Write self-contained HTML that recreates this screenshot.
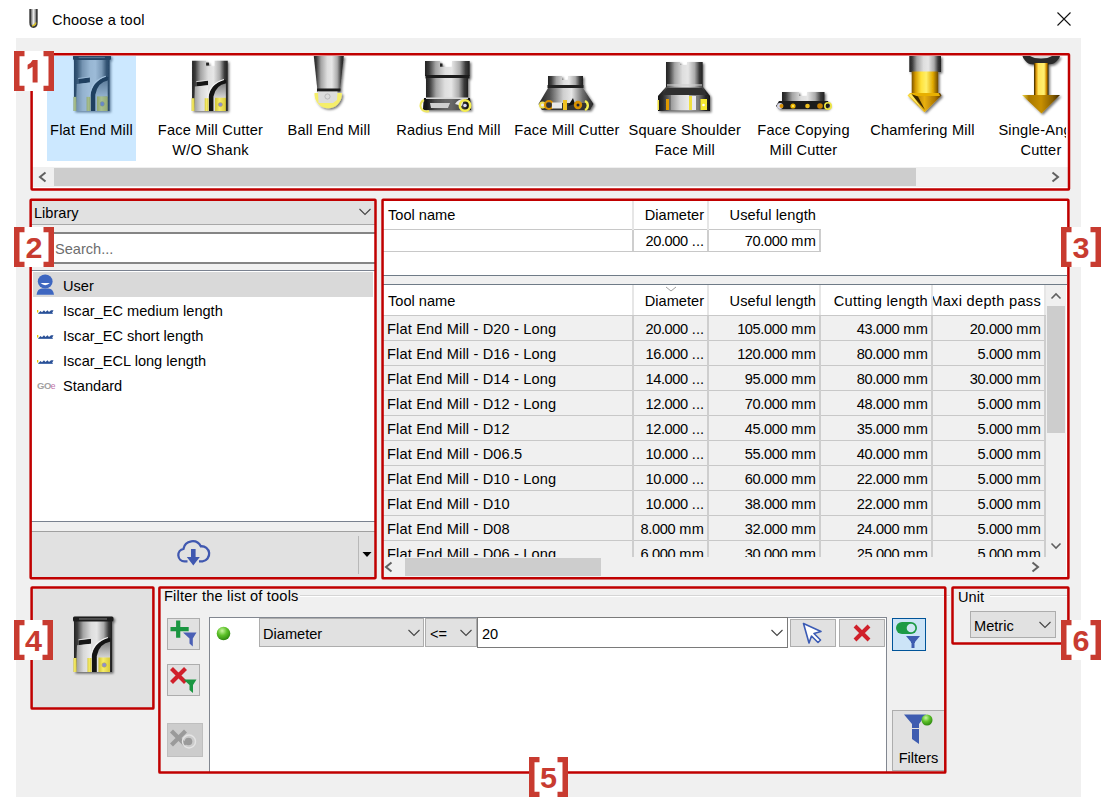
<!DOCTYPE html>
<html><head><meta charset="utf-8"><title>Choose a tool</title>
<style>
html,body{margin:0;padding:0;background:#fff;width:1114px;height:809px;overflow:hidden;position:relative}
.a{position:absolute}
.t{position:absolute;font-family:"Liberation Sans",sans-serif;font-size:14.6px;line-height:20px;white-space:nowrap;color:#000}
</style></head><body>
<svg class="a" style="left:26px;top:6px" width="16" height="24" viewBox="26 6 16 24">
<defs><linearGradient id="tg" x1="0" x2="1"><stop offset="0" stop-color="#555"/><stop offset=".5" stop-color="#e8e8e8"/><stop offset="1" stop-color="#666"/></linearGradient></defs>
<path d="M30.2 9 V22.5 Q30.2 27 33.5 27 Q36.8 27 36.8 22.5 V9" fill="url(#tg)" stroke="#3a3a3a" stroke-width="1.8"/>
<path d="M32 25.8 Q34.8 26 36 22.5" stroke="#d8c020" stroke-width="1.3" fill="none"/>
</svg>
<div class="t" style="left:52px;top:10.0px;font-size:14.6px;color:#000;font-weight:normal;letter-spacing:0.2px">Choose a tool</div>
<svg class="a" style="left:1056px;top:11px" width="16" height="16" viewBox="0 0 16 16"><path d="M1.5 1.5 L14.5 14.5 M14.5 1.5 L1.5 14.5" stroke="#111" stroke-width="1.1"/></svg>
<div class="a" style="left:16px;top:38px;width:1065px;height:759px;background:#f0f0f0"></div>
<div class="a" style="left:31px;top:53px;width:1037px;height:136px;background:#fff;border-top:1px solid #828790"></div>
<div class="a" style="left:47px;top:56px;width:89px;height:105px;background:#cce8ff"></div>
<div class="a" style="left:32px;top:167px;width:1036px;height:20px;background:#f0f0f0"></div>
<div class="a" style="left:54px;top:168px;width:862px;height:18px;background:#cdcdcd"></div>
<svg class="a" style="left:36px;top:170px" width="14" height="14" viewBox="0 0 14 14"><path d="M9.5 2.5 L4 7 L9.5 11.5" fill="none" stroke="#606060" stroke-width="2"/></svg>
<svg class="a" style="left:1048px;top:170px" width="14" height="14" viewBox="0 0 14 14"><path d="M4.5 2.5 L10 7 L4.5 11.5" fill="none" stroke="#606060" stroke-width="2"/></svg>
<div class="a" style="left:31px;top:56px;width:1035px;height:110px;overflow:hidden">
<div class="t" style="left:-89.5px;width:300px;text-align:center;top:64px;letter-spacing:0.2px">Flat End Mill</div>
<div class="t" style="left:29.5px;width:300px;text-align:center;top:64px;letter-spacing:0.2px">Face Mill Cutter</div>
<div class="t" style="left:29.5px;width:300px;text-align:center;top:84px;letter-spacing:0.2px">W/O Shank</div>
<div class="t" style="left:148px;width:300px;text-align:center;top:64px;letter-spacing:0.2px">Ball End Mill</div>
<div class="t" style="left:267.4px;width:300px;text-align:center;top:64px;letter-spacing:0.2px">Radius End Mill</div>
<div class="t" style="left:386px;width:300px;text-align:center;top:64px;letter-spacing:0.2px">Face Mill Cutter</div>
<div class="t" style="left:503.79999999999995px;width:300px;text-align:center;top:64px;letter-spacing:0.2px">Square Shoulder</div>
<div class="t" style="left:503.79999999999995px;width:300px;text-align:center;top:84px;letter-spacing:0.2px">Face Mill</div>
<div class="t" style="left:622.5px;width:300px;text-align:center;top:64px;letter-spacing:0.2px">Face Copying</div>
<div class="t" style="left:622.5px;width:300px;text-align:center;top:84px;letter-spacing:0.2px">Mill Cutter</div>
<div class="t" style="left:741.4px;width:300px;text-align:center;top:64px;letter-spacing:0.2px">Chamfering Mill</div>
<div class="t" style="left:860px;width:300px;text-align:center;top:64px;letter-spacing:0.2px">Single-Angle</div>
<div class="t" style="left:860px;width:300px;text-align:center;top:84px;letter-spacing:0.2px">Cutter</div>
<svg width="0" height="0" style="position:absolute"><defs>
<linearGradient id="metal" x1="0" x2="1"><stop offset="0" stop-color="#222"/><stop offset=".09" stop-color="#3c3c3c"/><stop offset=".24" stop-color="#a4a4a4"/><stop offset=".45" stop-color="#dedede"/><stop offset=".6" stop-color="#e6e6e6"/><stop offset=".78" stop-color="#ababab"/><stop offset=".91" stop-color="#3a3a3a"/><stop offset="1" stop-color="#202020"/></linearGradient>
<filter id="blue" color-interpolation-filters="sRGB"><feColorMatrix type="matrix" values="0.6 0 0 0 0.072  0 0.59 0 0 0.2  0 0 0.57 0 0.33  0 0 0 1 0"/></filter>
<linearGradient id="metal2" x1="0" x2="1"><stop offset="0" stop-color="#202020"/><stop offset=".2" stop-color="#505050"/><stop offset=".45" stop-color="#cfcfcf"/><stop offset=".6" stop-color="#e6e6e6"/><stop offset=".8" stop-color="#707070"/><stop offset="1" stop-color="#222"/></linearGradient>
<linearGradient id="face" x1="0" x2="1"><stop offset="0" stop-color="#9a9a9a"/><stop offset=".5" stop-color="#d8d8d8"/><stop offset="1" stop-color="#ececec"/></linearGradient>
<linearGradient id="facev" x1="0" y1="0" x2="0" y2="1"><stop offset="0" stop-color="#7a7a7a"/><stop offset="1" stop-color="#d8d8d8"/></linearGradient>
<linearGradient id="gold" x1="0" x2="1"><stop offset="0" stop-color="#7a5200"/><stop offset=".14" stop-color="#d49a00"/><stop offset=".35" stop-color="#ffe23a"/><stop offset=".55" stop-color="#fff06a"/><stop offset=".8" stop-color="#e2aa00"/><stop offset="1" stop-color="#6a4600"/></linearGradient>
<linearGradient id="goldc" x1="0" x2="1"><stop offset="0" stop-color="#ffe040"/><stop offset=".3" stop-color="#c08a00"/><stop offset=".5" stop-color="#e8b010"/><stop offset=".8" stop-color="#b07800"/><stop offset="1" stop-color="#5a3a00"/></linearGradient>
<linearGradient id="ins" x1="0" x2="1"><stop offset="0" stop-color="#cfc230"/><stop offset=".4" stop-color="#f6ec6a"/><stop offset="1" stop-color="#d8ca38"/></linearGradient>
<linearGradient id="goldl" x1="0" x2="1"><stop offset="0" stop-color="#2a2000"/><stop offset=".14" stop-color="#d89000"/><stop offset=".3" stop-color="#ffe45a"/><stop offset=".7" stop-color="#fff070"/><stop offset=".86" stop-color="#d08a00"/><stop offset="1" stop-color="#2a2000"/></linearGradient>
<linearGradient id="goldd" x1="0" x2="1"><stop offset="0" stop-color="#f0d848"/><stop offset=".18" stop-color="#a87800"/><stop offset=".5" stop-color="#c89000"/><stop offset=".8" stop-color="#8a6000"/><stop offset="1" stop-color="#3a2600"/></linearGradient>
<filter id="sh" x="-20%" y="-20%" width="150%" height="150%"><feDropShadow dx="1.5" dy="1.5" stdDeviation="1.1" flood-color="#000" flood-opacity=".55"/></filter>
</defs></svg>
<svg class="a" style="left:37px;top:0px;" width="50" height="60" viewBox="68 56 50 60"><g filter="url(#blue)"><g transform="translate(73 55) scale(0.9383 1.0090) translate(-8 -6.5)"><g filter="url(#sh)"><rect x="9" y="9" width="38" height="53" fill="url(#metal)"/><rect x="8" y="6.5" width="40.5" height="5" rx="1.5" fill="#1c1c1c"/><rect x="14" y="8.3" width="28" height="1.3" fill="#666"/></g><path d="M14 30.3 L26 28.6 L26 33.8 L14 35.2 Z" fill="#161616"/><path d="M12 35.2 L26 33.8 L26 62 L11 62 Z" fill="url(#face)"/><path d="M31.8 46 Q33 34 45 31 L45 48 L31.8 48 Z" fill="url(#facev)"/><path d="M26.8 62 V46 Q28.3 33 43.5 27.5 L45.5 28.5 V31.5 Q34 33.5 31.8 46 V62 Z" fill="#141414"/><path d="M26 62 V46 Q27.5 32 43 27.5" fill="none" stroke="#f4f4f4" stroke-width="1.1"/><path d="M13.5 29.8 L26 28.3" fill="none" stroke="#e8e8e8" stroke-width="0.9"/><rect x="8.5" y="48" width="3" height="14" fill="url(#ins)"/><rect x="22.5" y="48" width="4" height="14" fill="url(#ins)"/><rect x="33.5" y="47.5" width="11.5" height="14.5" fill="url(#ins)"/><circle cx="39.2" cy="55" r="2.3" fill="#8d8fd0" stroke="#c0b030" stroke-width=".5"/></g></g></svg>
<svg class="a" style="left:155px;top:0px;" width="50" height="60" viewBox="186 56 50 60"><g transform="translate(191.6 60.8) scale(0.9385 0.9127) translate(-8.5 -7)"><g filter="url(#sh)"><path d="M9 7 H24 V13 H33 V7 H47 V62 H9 Z" fill="url(#metal)"/><rect x="24" y="9" width="3" height="3" fill="#222"/></g><path d="M14 30.3 L26 28.6 L26 33.8 L14 35.2 Z" fill="#161616"/><path d="M12 35.2 L26 33.8 L26 62 L11 62 Z" fill="url(#face)"/><path d="M31.8 46 Q33 34 45 31 L45 48 L31.8 48 Z" fill="url(#facev)"/><path d="M26.8 62 V46 Q28.3 33 43.5 27.5 L45.5 28.5 V31.5 Q34 33.5 31.8 46 V62 Z" fill="#141414"/><path d="M26 62 V46 Q27.5 32 43 27.5" fill="none" stroke="#f4f4f4" stroke-width="1.1"/><path d="M13.5 29.8 L26 28.3" fill="none" stroke="#e8e8e8" stroke-width="0.9"/><rect x="8.5" y="48" width="3" height="14" fill="url(#ins)"/><rect x="22.5" y="48" width="4" height="14" fill="url(#ins)"/><rect x="33.5" y="47.5" width="11.5" height="14.5" fill="url(#ins)"/><circle cx="39.2" cy="55" r="2.3" fill="#8d8fd0" stroke="#c0b030" stroke-width=".5"/></g></svg>
<svg class="a" style="left:274px;top:0px;" width="48" height="62" viewBox="305 56 48 62"><g filter="url(#sh)"><path d="M313.8 56 H343.8 L340 91 H317.5 Z" fill="url(#metal)"/><rect x="317" y="88.5" width="23.5" height="3" fill="#1a1a1a"/><path d="M314.5 95 A13.7 14.5 0 0 0 341.8 95 L341.8 93 H314.5 Z" fill="#f5ee6a"/></g><path d="M318 91.5 H337.5 L337 100 L333 103 H318.5 Z" fill="#dcdcdc"/><circle cx="327.5" cy="96.5" r="2.6" fill="none" stroke="#b0b0b0" stroke-width=".8"/></svg>
<svg class="a" style="left:387px;top:0px;" width="60" height="62" viewBox="418 56 60 62"><g filter="url(#sh)"><path d="M425 61 H440 V67 H452 V61 H469.7 V76 H425 Z" fill="url(#metal)"/><rect x="440" y="63.5" width="2.5" height="3" fill="#222"/><rect x="425.5" y="75" width="44" height="3.5" fill="#1a1a1a"/><rect x="426" y="78" width="42" height="21" fill="url(#metal)"/><path d="M424 98 H470 L471 110 H423 Z" fill="url(#metal)"/><path d="M424 98 H470 L471 110 H423 Z" fill="#000" opacity=".55"/><rect x="426" y="97.5" width="42" height="1.5" fill="#d8d8d8"/></g><path d="M430 103 H450 L448 108 H431 Z" fill="#d0d0d0"/><path d="M455 104 Q458 99 464 99 L462 106 Z" fill="#e8e8e8"/><circle cx="465" cy="105.5" r="5.2" fill="none" stroke="#f5ee50" stroke-width="2.6"/><circle cx="465" cy="105.5" r="1.8" fill="#d8d8f8"/><path d="M424 100 A6 6 0 0 0 429 111" fill="none" stroke="#f0e860" stroke-width="2"/></svg>
<svg class="a" style="left:503px;top:0px;" width="64" height="62" viewBox="534 56 64 62"><g filter="url(#sh)"><path d="M548 76 H562 V80 H568 V76 H583 V86 H548 Z" fill="url(#metal)"/><rect x="547.5" y="85" width="36" height="3" fill="#222"/><path d="M548 88 H583 L593.5 104 L590 110 H542 L538.5 104 Z" fill="url(#metal2)"/></g><path d="M540 103 H592 L590 110 H542 Z" fill="#333"/><circle cx="542.5" cy="105" r="3.5" fill="#f0e050"/><circle cx="542.5" cy="105" r="1.5" fill="#e8e8f8"/><circle cx="549" cy="105" r="4" fill="none" stroke="#d89000" stroke-width="2.2"/><rect x="552" y="102.5" width="10" height="6" fill="#e8e8e8"/><rect x="563" y="100" width="4" height="10" fill="#f0c020"/><path d="M568 106 L573 98 L575 104 Z" fill="#111"/><circle cx="578" cy="105" r="4.2" fill="#d89000"/><circle cx="578" cy="105" r="1.5" fill="#223"/><path d="M585 101 A5 5 0 0 1 585 110" fill="none" stroke="#f5ee50" stroke-width="2.4"/></svg>
<svg class="a" style="left:623px;top:0px;" width="62" height="62" viewBox="654 56 62 62"><g filter="url(#sh)"><path d="M666 62 H680 V65 H687 V62 H702.7 V88 H666 Z" fill="url(#metal)"/><path d="M666 87 H703 L710 96 V111 H658 V96 Z" fill="url(#metal)"/><path d="M666 87 H703 L710 96 V111 H658 V96 Z" fill="#000" opacity=".3"/></g><path d="M667 88 H702 L707 95 H662 Z" fill="#303030"/><rect x="667" y="84" width="35" height="2.5" fill="#cfcfcf" opacity=".6"/><rect x="671" y="95" width="18" height="15" fill="url(#face)"/><rect x="689" y="96" width="3" height="14" fill="#f0e040"/><rect x="692" y="96" width="4" height="14" fill="#e8e8f0"/><rect x="666" y="99" width="3" height="11" fill="#e09a00"/><rect x="700.5" y="99" width="6.5" height="11" fill="#f5e830"/><circle cx="703.5" cy="105" r="1.3" fill="#fff"/><rect x="657.5" y="100" width="1.5" height="10" fill="#f0e040"/></svg>
<svg class="a" style="left:739px;top:0px;" width="66" height="60" viewBox="770 56 66 60"><g filter="url(#sh)"><path d="M782 92 H799 V96 H807 V92 H824.5 V102 H782 Z" fill="url(#metal)"/><path d="M779 101 H828 L830 106 L827 109 H779 L776 106 Z" fill="#1e1e1e"/></g><circle cx="780" cy="106" r="3" fill="#d8d8e8"/><circle cx="781.5" cy="106" r="2" fill="#d89000"/><circle cx="793" cy="106" r="2.6" fill="#e8b000"/><circle cx="793" cy="106" r="1" fill="#fff070"/><circle cx="807.5" cy="106" r="2.3" fill="#f0c020"/><circle cx="820" cy="106" r="2.8" fill="#c88000"/><circle cx="828" cy="106" r="3.2" fill="none" stroke="#f0e840" stroke-width="1.6"/></svg>
<svg class="a" style="left:871px;top:0px;" width="46" height="62" viewBox="902 56 46 62"><g filter="url(#sh)"><rect x="909.3" y="56" width="31.7" height="16" fill="url(#metal)"/><rect x="911.7" y="71.5" width="26.5" height="22" fill="url(#gold)"/><path d="M910 93 H940 L941.5 95.5 L924.5 112.3 L907.5 95.5 Z" fill="url(#goldc)"/></g><path d="M911 93 H938.5 L940 96 H909.5 Z" fill="#e8b000"/><path d="M911 94 L918 96.5 L925 110 Z" fill="#3a2800"/><path d="M909 95.5 L911 93.5 L924.5 112 Z" fill="#ffe860"/></svg>
<svg class="a" style="left:985px;top:0px;" width="52" height="64" viewBox="1016 56 52 64"><g filter="url(#sh)"><path d="M1022.5 56 H1060 Q1060 58 1057 61 Q1054 64.5 1048 64.5 H1034 Q1028 64.5 1025.5 61 Q1022.5 58 1022.5 56 Z" fill="#2c2c2c"/><rect x="1034" y="63" width="14.5" height="33" fill="url(#goldl)"/><path d="M1022 95 H1060 L1041.5 113.5 Z" fill="url(#goldd)"/></g><path d="M1030 56 H1052 Q1048 58.5 1041 58.5 Q1034 58.5 1030 56 Z" fill="#d8d8d8"/></svg>
</div>
<div class="a" style="left:31px;top:200px;width:344px;height:24px;background:#e1e1e1;border-bottom:1px solid #a8a8a8"></div>
<div class="t" style="left:34px;top:203.0px;font-size:14.6px;color:#000;font-weight:normal;">Library</div>
<svg class="a" style="left:358px;top:207px" width="14" height="10" viewBox="0 0 14 10"><path d="M1.5 2 L7 7.5 L12.5 2" fill="none" stroke="#444" stroke-width="1.1"/></svg>
<div class="a" style="left:31px;top:232px;width:344px;height:28px;background:#fff;border-top:2px solid #858585;border-bottom:2px solid #858585"></div>
<div class="t" style="left:55px;top:239.0px;font-size:14.6px;color:#6d6d6d;font-weight:normal;">Search...</div>
<div class="a" style="left:31px;top:270px;width:344px;height:250px;background:#fff;border-top:1px solid #7a8290;border-bottom:1px solid #7a8290"></div>
<div class="a" style="left:33px;top:272px;width:340px;height:25px;background:#d9d9d9"></div>
<svg class="a" style="left:35px;top:273px" width="22" height="24" viewBox="35 273 22 24"><ellipse cx="45.2" cy="281.5" rx="7.4" ry="6.9" fill="#3d66c0"/><path d="M40.5 283 Q45.2 287.3 49.9 283 Z" fill="#fff"/><path d="M36.6 294.8 Q37.5 288.6 42 288.6 H48.5 Q53 288.6 54 294.8 Z" fill="#3d66c0"/></svg>
<div class="t" style="left:63px;top:276.0px;font-size:14.6px;color:#000;font-weight:normal;">User</div>
<div class="t" style="left:63px;top:301.0px;font-size:14.6px;color:#000;font-weight:normal;">Iscar_EC medium length</div>
<svg class="a" style="left:37px;top:308px" width="18" height="7" viewBox="0 0 18 7"><rect x="0" y="2" width="1.3" height="2.5" fill="#e8c800"/><path d="M1.3 5.2 L3.5 3 L5 4.3 L7 2.3 L8.5 4 L10.5 2.3 L12 4 L14 2.3 L16.5 2.3 L15 5.3 Z" fill="#2a5096"/><rect x="1.3" y="5" width="14.5" height="0.9" fill="#3c64a8"/></svg>
<div class="t" style="left:63px;top:326.0px;font-size:14.6px;color:#000;font-weight:normal;">Iscar_EC short length</div>
<svg class="a" style="left:37px;top:333px" width="18" height="7" viewBox="0 0 18 7"><rect x="0" y="2" width="1.3" height="2.5" fill="#e8c800"/><path d="M1.3 5.2 L3.5 3 L5 4.3 L7 2.3 L8.5 4 L10.5 2.3 L12 4 L14 2.3 L16.5 2.3 L15 5.3 Z" fill="#2a5096"/><rect x="1.3" y="5" width="14.5" height="0.9" fill="#3c64a8"/></svg>
<div class="t" style="left:63px;top:351.0px;font-size:14.6px;color:#000;font-weight:normal;">Iscar_ECL long length</div>
<svg class="a" style="left:37px;top:358px" width="18" height="7" viewBox="0 0 18 7"><rect x="0" y="2" width="1.3" height="2.5" fill="#e8c800"/><path d="M1.3 5.2 L3.5 3 L5 4.3 L7 2.3 L8.5 4 L10.5 2.3 L12 4 L14 2.3 L16.5 2.3 L15 5.3 Z" fill="#2a5096"/><rect x="1.3" y="5" width="14.5" height="0.9" fill="#3c64a8"/></svg>
<div class="t" style="left:63px;top:376.0px;font-size:14.6px;color:#000;font-weight:normal;">Standard</div>
<div class="t" style="left:37px;top:375.5px;font-size:9.5px;color:#a2a2a2;font-weight:bold;letter-spacing:-0.5px">GO<span style="color:#c070a8;font-size:8.5px;font-weight:normal">e</span></div>
<div class="a" style="left:31px;top:531px;width:344px;height:46px;background:#e1e1e1;border-top:1px solid #a0a0a0"></div>
<div class="a" style="left:358px;top:536px;width:1px;height:38px;background:#b8b8b8"></div>
<svg class="a" style="left:362px;top:551px" width="10" height="7" viewBox="0 0 10 7"><path d="M0.5 1 L9.5 1 L5 6 Z" fill="#000"/></svg>
<svg class="a" style="left:175px;top:535px" width="40" height="35" viewBox="175 535 40 35"><path d="M187.5 561.3 H184.5 A6.3 6.3 0 0 1 183.5 548.8 A9.2 9.2 0 0 1 200.8 546.3 A7.2 7.2 0 0 1 202.5 561.3 H199" fill="none" stroke="#4058b0" stroke-width="2.3"/><path d="M191 549 H195.6 V557 H199.8 L193.3 565.5 L186.8 557 H191 Z" fill="#4058b0"/></svg>
<div class="a" style="left:383px;top:200px;width:684px;height:376px;background:#fff"></div>
<div class="a" style="left:383px;top:229px;width:438px;height:1px;background:#c8c8c8"></div>
<div class="a" style="left:632px;top:200px;width:2px;height:30px;background:#e6e6e6"></div>
<div class="a" style="left:707px;top:200px;width:2px;height:30px;background:#e6e6e6"></div>
<div class="a" style="left:632px;top:230px;width:2px;height:22px;background:#cecece"></div>
<div class="a" style="left:707px;top:230px;width:2px;height:22px;background:#cecece"></div>
<div class="a" style="left:819px;top:230px;width:2px;height:22px;background:#cecece"></div>
<div class="a" style="left:383px;top:251px;width:438px;height:1px;background:#c8c8c8"></div>
<div class="t" style="left:388px;top:205.0px;font-size:14.6px;color:#000;font-weight:normal;">Tool name</div>
<div class="t" style="left:304px;width:400px;text-align:right;top:205.0px;font-size:14.6px;color:#000;font-weight:normal;">Diameter</div>
<div class="t" style="left:416px;width:400px;text-align:right;top:205.0px;font-size:14.6px;color:#000;font-weight:normal;letter-spacing:0.1px">Useful length</div>
<div class="t" style="left:304px;width:400px;text-align:right;top:231.0px;font-size:14.6px;color:#000;font-weight:normal;"><span style="letter-spacing:-0.4px">20.000</span> ...</div>
<div class="t" style="left:416px;width:400px;text-align:right;top:231.0px;font-size:14.6px;color:#000;font-weight:normal;"><span style="letter-spacing:-0.4px">70.000</span> <span style="letter-spacing:0.5px;margin-right:-0.5px">mm</span></div>
<div class="a" style="left:383px;top:275px;width:684px;height:10px;background:#f0f0f0;border-top:1px solid #6f7b87;border-bottom:1px solid #6f7b87;box-sizing:border-box"></div>
<div class="a" style="left:632px;top:285px;width:2px;height:31px;background:#e6e6e6"></div>
<div class="a" style="left:707px;top:285px;width:2px;height:31px;background:#e6e6e6"></div>
<div class="a" style="left:819px;top:285px;width:2px;height:31px;background:#e6e6e6"></div>
<div class="a" style="left:931px;top:285px;width:2px;height:31px;background:#e6e6e6"></div>
<div class="a" style="left:1044px;top:285px;width:2px;height:31px;background:#e6e6e6"></div>
<div class="a" style="left:383px;top:315px;width:663px;height:1px;background:#c8c8c8"></div>
<svg class="a" style="left:665px;top:286px" width="12" height="6" viewBox="0 0 12 6"><path d="M1 1 L6 5 L11 1" fill="none" stroke="#a0a0a0" stroke-width="1"/></svg>
<div class="t" style="left:388px;top:291.0px;font-size:14.6px;color:#000;font-weight:normal;">Tool name</div>
<div class="t" style="left:304px;width:400px;text-align:right;top:291.0px;font-size:14.6px;color:#000;font-weight:normal;">Diameter</div>
<div class="t" style="left:416px;width:400px;text-align:right;top:291.0px;font-size:14.6px;color:#000;font-weight:normal;letter-spacing:0.1px">Useful length</div>
<div class="t" style="left:528px;width:400px;text-align:right;top:291.0px;font-size:14.6px;color:#000;font-weight:normal;letter-spacing:0.3px">Cutting length</div>
<div class="a" style="left:933px;top:285px;width:112px;height:30px;overflow:hidden">
<div class="t" style="left:-300px;width:408px;text-align:right;top:6px;letter-spacing:0.3px">Maxi depth pass</div>
</div>
<div class="a" style="left:383px;top:316px;width:663px;height:241px;overflow:hidden">
<div class="a" style="left:0;top:0px;width:663px;height:24px;background:#f0f0f0;border-bottom:1px solid #c8c8c8"></div>
<div class="a" style="left:0;top:25px;width:663px;height:1px;background:#e4e4e4"></div>
<div class="a" style="left:249px;top:0px;width:2px;height:25px;background:#cecece"></div>
<div class="a" style="left:324px;top:0px;width:2px;height:25px;background:#cecece"></div>
<div class="a" style="left:436px;top:0px;width:2px;height:25px;background:#cecece"></div>
<div class="a" style="left:548px;top:0px;width:2px;height:25px;background:#cecece"></div>
<div class="a" style="left:661px;top:0px;width:2px;height:25px;background:#cecece"></div>
<div class="t" style="left:4px;top:3px;letter-spacing:0.15px">Flat End Mill - D20 - Long</div>
<div class="t" style="left:21px;width:300px;text-align:right;top:3px"><span style="letter-spacing:-0.4px">20.000</span> ...</div>
<div class="t" style="left:133px;width:300px;text-align:right;top:3px"><span style="letter-spacing:-0.4px">105.000</span> <span style="letter-spacing:0.5px;margin-right:-0.5px">mm</span></div>
<div class="t" style="left:245px;width:300px;text-align:right;top:3px"><span style="letter-spacing:-0.4px">43.000</span> <span style="letter-spacing:0.5px;margin-right:-0.5px">mm</span></div>
<div class="t" style="left:358px;width:300px;text-align:right;top:3px"><span style="letter-spacing:-0.4px">20.000</span> <span style="letter-spacing:0.5px;margin-right:-0.5px">mm</span></div>
<div class="a" style="left:0;top:25px;width:663px;height:24px;background:#f0f0f0;border-bottom:1px solid #c8c8c8"></div>
<div class="a" style="left:0;top:50px;width:663px;height:1px;background:#e4e4e4"></div>
<div class="a" style="left:249px;top:25px;width:2px;height:25px;background:#cecece"></div>
<div class="a" style="left:324px;top:25px;width:2px;height:25px;background:#cecece"></div>
<div class="a" style="left:436px;top:25px;width:2px;height:25px;background:#cecece"></div>
<div class="a" style="left:548px;top:25px;width:2px;height:25px;background:#cecece"></div>
<div class="a" style="left:661px;top:25px;width:2px;height:25px;background:#cecece"></div>
<div class="t" style="left:4px;top:28px;letter-spacing:0.15px">Flat End Mill - D16 - Long</div>
<div class="t" style="left:21px;width:300px;text-align:right;top:28px"><span style="letter-spacing:-0.4px">16.000</span> ...</div>
<div class="t" style="left:133px;width:300px;text-align:right;top:28px"><span style="letter-spacing:-0.4px">120.000</span> <span style="letter-spacing:0.5px;margin-right:-0.5px">mm</span></div>
<div class="t" style="left:245px;width:300px;text-align:right;top:28px"><span style="letter-spacing:-0.4px">80.000</span> <span style="letter-spacing:0.5px;margin-right:-0.5px">mm</span></div>
<div class="t" style="left:358px;width:300px;text-align:right;top:28px"><span style="letter-spacing:-0.4px">5.000</span> <span style="letter-spacing:0.5px;margin-right:-0.5px">mm</span></div>
<div class="a" style="left:0;top:50px;width:663px;height:24px;background:#f0f0f0;border-bottom:1px solid #c8c8c8"></div>
<div class="a" style="left:0;top:75px;width:663px;height:1px;background:#e4e4e4"></div>
<div class="a" style="left:249px;top:50px;width:2px;height:25px;background:#cecece"></div>
<div class="a" style="left:324px;top:50px;width:2px;height:25px;background:#cecece"></div>
<div class="a" style="left:436px;top:50px;width:2px;height:25px;background:#cecece"></div>
<div class="a" style="left:548px;top:50px;width:2px;height:25px;background:#cecece"></div>
<div class="a" style="left:661px;top:50px;width:2px;height:25px;background:#cecece"></div>
<div class="t" style="left:4px;top:53px;letter-spacing:0.15px">Flat End Mill - D14 - Long</div>
<div class="t" style="left:21px;width:300px;text-align:right;top:53px"><span style="letter-spacing:-0.4px">14.000</span> ...</div>
<div class="t" style="left:133px;width:300px;text-align:right;top:53px"><span style="letter-spacing:-0.4px">95.000</span> <span style="letter-spacing:0.5px;margin-right:-0.5px">mm</span></div>
<div class="t" style="left:245px;width:300px;text-align:right;top:53px"><span style="letter-spacing:-0.4px">80.000</span> <span style="letter-spacing:0.5px;margin-right:-0.5px">mm</span></div>
<div class="t" style="left:358px;width:300px;text-align:right;top:53px"><span style="letter-spacing:-0.4px">30.000</span> <span style="letter-spacing:0.5px;margin-right:-0.5px">mm</span></div>
<div class="a" style="left:0;top:75px;width:663px;height:24px;background:#f0f0f0;border-bottom:1px solid #c8c8c8"></div>
<div class="a" style="left:0;top:100px;width:663px;height:1px;background:#e4e4e4"></div>
<div class="a" style="left:249px;top:75px;width:2px;height:25px;background:#cecece"></div>
<div class="a" style="left:324px;top:75px;width:2px;height:25px;background:#cecece"></div>
<div class="a" style="left:436px;top:75px;width:2px;height:25px;background:#cecece"></div>
<div class="a" style="left:548px;top:75px;width:2px;height:25px;background:#cecece"></div>
<div class="a" style="left:661px;top:75px;width:2px;height:25px;background:#cecece"></div>
<div class="t" style="left:4px;top:78px;letter-spacing:0.15px">Flat End Mill - D12 - Long</div>
<div class="t" style="left:21px;width:300px;text-align:right;top:78px"><span style="letter-spacing:-0.4px">12.000</span> ...</div>
<div class="t" style="left:133px;width:300px;text-align:right;top:78px"><span style="letter-spacing:-0.4px">70.000</span> <span style="letter-spacing:0.5px;margin-right:-0.5px">mm</span></div>
<div class="t" style="left:245px;width:300px;text-align:right;top:78px"><span style="letter-spacing:-0.4px">48.000</span> <span style="letter-spacing:0.5px;margin-right:-0.5px">mm</span></div>
<div class="t" style="left:358px;width:300px;text-align:right;top:78px"><span style="letter-spacing:-0.4px">5.000</span> <span style="letter-spacing:0.5px;margin-right:-0.5px">mm</span></div>
<div class="a" style="left:0;top:100px;width:663px;height:24px;background:#f0f0f0;border-bottom:1px solid #c8c8c8"></div>
<div class="a" style="left:0;top:125px;width:663px;height:1px;background:#e4e4e4"></div>
<div class="a" style="left:249px;top:100px;width:2px;height:25px;background:#cecece"></div>
<div class="a" style="left:324px;top:100px;width:2px;height:25px;background:#cecece"></div>
<div class="a" style="left:436px;top:100px;width:2px;height:25px;background:#cecece"></div>
<div class="a" style="left:548px;top:100px;width:2px;height:25px;background:#cecece"></div>
<div class="a" style="left:661px;top:100px;width:2px;height:25px;background:#cecece"></div>
<div class="t" style="left:4px;top:103px;letter-spacing:0.15px">Flat End Mill - D12</div>
<div class="t" style="left:21px;width:300px;text-align:right;top:103px"><span style="letter-spacing:-0.4px">12.000</span> ...</div>
<div class="t" style="left:133px;width:300px;text-align:right;top:103px"><span style="letter-spacing:-0.4px">45.000</span> <span style="letter-spacing:0.5px;margin-right:-0.5px">mm</span></div>
<div class="t" style="left:245px;width:300px;text-align:right;top:103px"><span style="letter-spacing:-0.4px">35.000</span> <span style="letter-spacing:0.5px;margin-right:-0.5px">mm</span></div>
<div class="t" style="left:358px;width:300px;text-align:right;top:103px"><span style="letter-spacing:-0.4px">5.000</span> <span style="letter-spacing:0.5px;margin-right:-0.5px">mm</span></div>
<div class="a" style="left:0;top:125px;width:663px;height:24px;background:#f0f0f0;border-bottom:1px solid #c8c8c8"></div>
<div class="a" style="left:0;top:150px;width:663px;height:1px;background:#e4e4e4"></div>
<div class="a" style="left:249px;top:125px;width:2px;height:25px;background:#cecece"></div>
<div class="a" style="left:324px;top:125px;width:2px;height:25px;background:#cecece"></div>
<div class="a" style="left:436px;top:125px;width:2px;height:25px;background:#cecece"></div>
<div class="a" style="left:548px;top:125px;width:2px;height:25px;background:#cecece"></div>
<div class="a" style="left:661px;top:125px;width:2px;height:25px;background:#cecece"></div>
<div class="t" style="left:4px;top:128px;letter-spacing:0.15px">Flat End Mill - D06.5</div>
<div class="t" style="left:21px;width:300px;text-align:right;top:128px"><span style="letter-spacing:-0.4px">10.000</span> ...</div>
<div class="t" style="left:133px;width:300px;text-align:right;top:128px"><span style="letter-spacing:-0.4px">55.000</span> <span style="letter-spacing:0.5px;margin-right:-0.5px">mm</span></div>
<div class="t" style="left:245px;width:300px;text-align:right;top:128px"><span style="letter-spacing:-0.4px">40.000</span> <span style="letter-spacing:0.5px;margin-right:-0.5px">mm</span></div>
<div class="t" style="left:358px;width:300px;text-align:right;top:128px"><span style="letter-spacing:-0.4px">5.000</span> <span style="letter-spacing:0.5px;margin-right:-0.5px">mm</span></div>
<div class="a" style="left:0;top:150px;width:663px;height:24px;background:#f0f0f0;border-bottom:1px solid #c8c8c8"></div>
<div class="a" style="left:0;top:175px;width:663px;height:1px;background:#e4e4e4"></div>
<div class="a" style="left:249px;top:150px;width:2px;height:25px;background:#cecece"></div>
<div class="a" style="left:324px;top:150px;width:2px;height:25px;background:#cecece"></div>
<div class="a" style="left:436px;top:150px;width:2px;height:25px;background:#cecece"></div>
<div class="a" style="left:548px;top:150px;width:2px;height:25px;background:#cecece"></div>
<div class="a" style="left:661px;top:150px;width:2px;height:25px;background:#cecece"></div>
<div class="t" style="left:4px;top:153px;letter-spacing:0.15px">Flat End Mill - D10 - Long</div>
<div class="t" style="left:21px;width:300px;text-align:right;top:153px"><span style="letter-spacing:-0.4px">10.000</span> ...</div>
<div class="t" style="left:133px;width:300px;text-align:right;top:153px"><span style="letter-spacing:-0.4px">60.000</span> <span style="letter-spacing:0.5px;margin-right:-0.5px">mm</span></div>
<div class="t" style="left:245px;width:300px;text-align:right;top:153px"><span style="letter-spacing:-0.4px">22.000</span> <span style="letter-spacing:0.5px;margin-right:-0.5px">mm</span></div>
<div class="t" style="left:358px;width:300px;text-align:right;top:153px"><span style="letter-spacing:-0.4px">5.000</span> <span style="letter-spacing:0.5px;margin-right:-0.5px">mm</span></div>
<div class="a" style="left:0;top:175px;width:663px;height:24px;background:#f0f0f0;border-bottom:1px solid #c8c8c8"></div>
<div class="a" style="left:0;top:200px;width:663px;height:1px;background:#e4e4e4"></div>
<div class="a" style="left:249px;top:175px;width:2px;height:25px;background:#cecece"></div>
<div class="a" style="left:324px;top:175px;width:2px;height:25px;background:#cecece"></div>
<div class="a" style="left:436px;top:175px;width:2px;height:25px;background:#cecece"></div>
<div class="a" style="left:548px;top:175px;width:2px;height:25px;background:#cecece"></div>
<div class="a" style="left:661px;top:175px;width:2px;height:25px;background:#cecece"></div>
<div class="t" style="left:4px;top:178px;letter-spacing:0.15px">Flat End Mill - D10</div>
<div class="t" style="left:21px;width:300px;text-align:right;top:178px"><span style="letter-spacing:-0.4px">10.000</span> ...</div>
<div class="t" style="left:133px;width:300px;text-align:right;top:178px"><span style="letter-spacing:-0.4px">38.000</span> <span style="letter-spacing:0.5px;margin-right:-0.5px">mm</span></div>
<div class="t" style="left:245px;width:300px;text-align:right;top:178px"><span style="letter-spacing:-0.4px">22.000</span> <span style="letter-spacing:0.5px;margin-right:-0.5px">mm</span></div>
<div class="t" style="left:358px;width:300px;text-align:right;top:178px"><span style="letter-spacing:-0.4px">5.000</span> <span style="letter-spacing:0.5px;margin-right:-0.5px">mm</span></div>
<div class="a" style="left:0;top:200px;width:663px;height:24px;background:#f0f0f0;border-bottom:1px solid #c8c8c8"></div>
<div class="a" style="left:0;top:225px;width:663px;height:1px;background:#e4e4e4"></div>
<div class="a" style="left:249px;top:200px;width:2px;height:25px;background:#cecece"></div>
<div class="a" style="left:324px;top:200px;width:2px;height:25px;background:#cecece"></div>
<div class="a" style="left:436px;top:200px;width:2px;height:25px;background:#cecece"></div>
<div class="a" style="left:548px;top:200px;width:2px;height:25px;background:#cecece"></div>
<div class="a" style="left:661px;top:200px;width:2px;height:25px;background:#cecece"></div>
<div class="t" style="left:4px;top:203px;letter-spacing:0.15px">Flat End Mill - D08</div>
<div class="t" style="left:21px;width:300px;text-align:right;top:203px"><span style="letter-spacing:-0.4px">8.000</span> <span style="letter-spacing:0.5px;margin-right:-0.5px">mm</span></div>
<div class="t" style="left:133px;width:300px;text-align:right;top:203px"><span style="letter-spacing:-0.4px">32.000</span> <span style="letter-spacing:0.5px;margin-right:-0.5px">mm</span></div>
<div class="t" style="left:245px;width:300px;text-align:right;top:203px"><span style="letter-spacing:-0.4px">24.000</span> <span style="letter-spacing:0.5px;margin-right:-0.5px">mm</span></div>
<div class="t" style="left:358px;width:300px;text-align:right;top:203px"><span style="letter-spacing:-0.4px">5.000</span> <span style="letter-spacing:0.5px;margin-right:-0.5px">mm</span></div>
<div class="a" style="left:0;top:225px;width:663px;height:24px;background:#f0f0f0;border-bottom:1px solid #c8c8c8"></div>
<div class="a" style="left:0;top:250px;width:663px;height:1px;background:#e4e4e4"></div>
<div class="a" style="left:249px;top:225px;width:2px;height:25px;background:#cecece"></div>
<div class="a" style="left:324px;top:225px;width:2px;height:25px;background:#cecece"></div>
<div class="a" style="left:436px;top:225px;width:2px;height:25px;background:#cecece"></div>
<div class="a" style="left:548px;top:225px;width:2px;height:25px;background:#cecece"></div>
<div class="a" style="left:661px;top:225px;width:2px;height:25px;background:#cecece"></div>
<div class="t" style="left:4px;top:228px;letter-spacing:0.15px">Flat End Mill - D06 - Long</div>
<div class="t" style="left:21px;width:300px;text-align:right;top:228px"><span style="letter-spacing:-0.4px">6.000</span> <span style="letter-spacing:0.5px;margin-right:-0.5px">mm</span></div>
<div class="t" style="left:133px;width:300px;text-align:right;top:228px"><span style="letter-spacing:-0.4px">30.000</span> <span style="letter-spacing:0.5px;margin-right:-0.5px">mm</span></div>
<div class="t" style="left:245px;width:300px;text-align:right;top:228px"><span style="letter-spacing:-0.4px">25.000</span> <span style="letter-spacing:0.5px;margin-right:-0.5px">mm</span></div>
<div class="t" style="left:358px;width:300px;text-align:right;top:228px"><span style="letter-spacing:-0.4px">5.000</span> <span style="letter-spacing:0.5px;margin-right:-0.5px">mm</span></div>
</div>
<div class="a" style="left:1046px;top:285px;width:20px;height:272px;background:#f0f0f0"></div>
<div class="a" style="left:1047px;top:306px;width:18px;height:127px;background:#cdcdcd"></div>
<svg class="a" style="left:1049px;top:290px" width="14" height="12" viewBox="0 0 14 12"><path d="M2.5 8.5 L7 4 L11.5 8.5" fill="none" stroke="#606060" stroke-width="1.6"/></svg>
<svg class="a" style="left:1049px;top:540px" width="14" height="12" viewBox="0 0 14 12"><path d="M2.5 3.5 L7 8 L11.5 3.5" fill="none" stroke="#606060" stroke-width="1.6"/></svg>
<div class="a" style="left:383px;top:557px;width:683px;height:20px;background:#f0f0f0"></div>
<div class="a" style="left:405px;top:558px;width:196px;height:18px;background:#cdcdcd"></div>
<svg class="a" style="left:382px;top:560px" width="14" height="14" viewBox="0 0 14 14"><path d="M9.5 2.5 L4 7 L9.5 11.5" fill="none" stroke="#606060" stroke-width="2"/></svg>
<svg class="a" style="left:1028px;top:560px" width="14" height="14" viewBox="0 0 14 14"><path d="M4.5 2.5 L10 7 L4.5 11.5" fill="none" stroke="#606060" stroke-width="2"/></svg>
<div class="a" style="left:32px;top:589px;width:121px;height:119px;background:#e1e1e1"></div>
<svg class="a" style="left:60px;top:605px" width="65" height="80" viewBox="60 605 65 80"><g transform="translate(65 610)"><g filter="url(#sh)"><rect x="9" y="9" width="38" height="53" fill="url(#metal)"/><rect x="8" y="6.5" width="40.5" height="5" rx="1.5" fill="#1c1c1c"/><rect x="14" y="8.3" width="28" height="1.3" fill="#666"/></g><path d="M14 30.3 L26 28.6 L26 33.8 L14 35.2 Z" fill="#161616"/><path d="M12 35.2 L26 33.8 L26 62 L11 62 Z" fill="url(#face)"/><path d="M31.8 46 Q33 34 45 31 L45 48 L31.8 48 Z" fill="url(#facev)"/><path d="M26.8 62 V46 Q28.3 33 43.5 27.5 L45.5 28.5 V31.5 Q34 33.5 31.8 46 V62 Z" fill="#141414"/><path d="M26 62 V46 Q27.5 32 43 27.5" fill="none" stroke="#f4f4f4" stroke-width="1.1"/><path d="M13.5 29.8 L26 28.3" fill="none" stroke="#e8e8e8" stroke-width="0.9"/><rect x="8.5" y="48" width="3" height="14" fill="url(#ins)"/><rect x="22.5" y="48" width="4" height="14" fill="url(#ins)"/><rect x="33.5" y="47.5" width="11.5" height="14.5" fill="url(#ins)"/><circle cx="39.2" cy="55" r="2.3" fill="#8d8fd0" stroke="#c0b030" stroke-width=".5"/></g></svg>
<div class="t" style="left:164px;top:586.0px;font-size:14.6px;color:#000;font-weight:normal;letter-spacing:0.2px">Filter the list of tools</div>
<div class="a" style="left:300px;top:595px;width:650px;height:1px;background:#d5d5d5;border-bottom:1px solid #fff"></div>
<div class="a" style="left:209px;top:617px;width:678px;height:155px;background:#fff;border-left:1px solid #828790;border-top:1px solid #828790;border-right:1px solid #828790;box-sizing:border-box"></div>
<svg class="a" style="left:215px;top:625px" width="17" height="17" viewBox="0 0 17 17"><defs><radialGradient id="gd" cx=".4" cy=".3" r=".7"><stop offset="0" stop-color="#c8f5a0"/><stop offset=".5" stop-color="#5ec22a"/><stop offset="1" stop-color="#2f8a10"/></radialGradient></defs><circle cx="8.5" cy="8.5" r="6.8" fill="url(#gd)"/></svg>
<div class="a" style="left:259px;top:618px;width:165px;height:29px;background:#e1e1e1;border:1px solid #adadad;box-sizing:border-box"></div>
<div class="t" style="left:263px;top:624.0px;font-size:14.6px;color:#000;font-weight:normal;">Diameter</div>
<svg class="a" style="left:407px;top:628px" width="14" height="10" viewBox="0 0 14 10"><path d="M1.5 2 L7 7.5 L12.5 2" fill="none" stroke="#444" stroke-width="1.1"/></svg>
<div class="a" style="left:425px;top:618px;width:52px;height:29px;background:#e1e1e1;border:1px solid #adadad;box-sizing:border-box"></div>
<div class="t" style="left:430px;top:624.0px;font-size:14.6px;color:#000;font-weight:normal;">&lt;=</div>
<svg class="a" style="left:459px;top:628px" width="14" height="10" viewBox="0 0 14 10"><path d="M1.5 2 L7 7.5 L12.5 2" fill="none" stroke="#444" stroke-width="1.1"/></svg>
<div class="a" style="left:477px;top:617px;width:311px;height:31px;background:#fff;border:1px solid #7a7a7a;box-sizing:border-box"></div>
<div class="t" style="left:482px;top:624.0px;font-size:14.6px;color:#000;font-weight:normal;">20</div>
<svg class="a" style="left:770px;top:628px" width="14" height="10" viewBox="0 0 14 10"><path d="M1.5 2 L7 7.5 L12.5 2" fill="none" stroke="#444" stroke-width="1.1"/></svg>
<div class="a" style="left:790px;top:619px;width:46px;height:28px;background:#e1e1e1;border:1px solid #adadad;box-sizing:border-box"></div>
<svg class="a" style="left:801px;top:622px" width="24" height="22" viewBox="0 0 24 22"><path d="M2.5 1.5 L20 9.5 L13 11.5 L19.5 18 L17 20.5 L10.5 14 L8 21 Z" fill="#fff" stroke="#3b5bb5" stroke-width="1.6" stroke-linejoin="round"/></svg>
<div class="a" style="left:839px;top:619px;width:46px;height:28px;background:#e1e1e1;border:1px solid #adadad;box-sizing:border-box"></div>
<svg class="a" style="left:853px;top:624px" width="18" height="18" viewBox="0 0 18 18"><path d="M2 2 L16 16 M16 2 L2 16" stroke="#d0202a" stroke-width="4"/></svg>
<div class="a" style="left:892px;top:618px;width:34px;height:33px;background:#cce4f7;border:1px solid #005499;box-sizing:border-box"></div>
<svg class="a" style="left:895px;top:621px" width="28" height="28" viewBox="0 0 28 28"><rect x="1" y="1" width="21" height="12" rx="6" fill="#1d9a46"/><circle cx="16" cy="7" r="4.3" fill="#cfe6f4"/><path d="M11 15 H25 L20 21 V22 H16 V21 Z" fill="#3e5cb0"/><rect x="16.5" y="22" width="3" height="5" fill="#3e5cb0"/></svg>
<div class="a" style="left:167px;top:618px;width:33px;height:32px;background:#e1e1e1;border:1px solid #adadad;box-sizing:border-box"></div>
<svg class="a" style="left:167px;top:618px" width="34" height="33" viewBox="167 618 34 33"><path d="M178.2 620.5 V637.8 M170.5 629.2 H188.7" stroke="#1a9641" stroke-width="4.2"/><path d="M183 632.5 H196.5 L192.8 638.5 V646.5 L189.5 643.5 V638.5 Z" fill="#4a5fb5"/></svg>
<div class="a" style="left:167px;top:664px;width:33px;height:32px;background:#e1e1e1;border:1px solid #adadad;box-sizing:border-box"></div>
<svg class="a" style="left:167px;top:664px" width="34" height="33" viewBox="167 664 34 33"><path d="M171.5 668.5 L185.5 682.5 M185.5 668.5 L171.5 682.5" stroke="#d0202a" stroke-width="4.2"/><path d="M183.5 679.5 H196.5 L193 685 V693 L189.5 690 V685 Z" fill="#1a9641"/></svg>
<div class="a" style="left:167px;top:723px;width:36px;height:34px;background:#cccccc;border:1px solid #bfbfbf;box-sizing:border-box"></div>
<svg class="a" style="left:167px;top:723px" width="37" height="35" viewBox="167 723 37 35"><path d="M171.5 731 L185.5 745 M185.5 731 L171.5 745" stroke="#9a9a9a" stroke-width="4.2"/><circle cx="189" cy="741.5" r="6.5" fill="none" stroke="#e4e4e4" stroke-width="1.4"/><circle cx="188.5" cy="741.5" r="3.8" fill="#9a9a9a"/></svg>
<div class="a" style="left:892px;top:710px;width:53px;height:61px;background:#e1e1e1;border:1px solid #adadad;box-sizing:border-box"></div>
<svg class="a" style="left:902px;top:712px" width="34" height="34" viewBox="0 0 34 34"><path d="M2 2.5 H24 L17 12 V16 H10 V12 Z" fill="#3e5cb0"/><path d="M10 17 H17 V32 L10 27 Z" fill="#3e5cb0"/><defs><radialGradient id="gd2" cx=".4" cy=".3" r=".7"><stop offset="0" stop-color="#c8f5a0"/><stop offset=".5" stop-color="#5ec22a"/><stop offset="1" stop-color="#2f8a10"/></radialGradient></defs><circle cx="25" cy="8" r="5.5" fill="url(#gd2)"/></svg>
<div class="t" style="left:768.5px;width:300px;text-align:center;top:748.0px;font-size:14.6px;color:#000;font-weight:normal;">Filters</div>
<div class="t" style="left:958px;top:587.0px;font-size:14.6px;color:#000;font-weight:normal;">Unit</div>
<div class="a" style="left:990px;top:595px;width:77px;height:1px;background:#d5d5d5;border-bottom:1px solid #fff"></div>
<div class="a" style="left:970px;top:611px;width:86px;height:27px;background:#e1e1e1;border:1px solid #adadad;box-sizing:border-box"></div>
<div class="t" style="left:974px;top:616.0px;font-size:14.6px;color:#000;font-weight:normal;">Metric</div>
<svg class="a" style="left:1038px;top:620px" width="14" height="10" viewBox="0 0 14 10"><path d="M1.5 2 L7 7.5 L12.5 2" fill="none" stroke="#444" stroke-width="1.1"/></svg>
<svg class="a" style="left:0;top:0" width="1114" height="809" viewBox="0 0 1114 809">
<g fill="none" stroke="#c00000" stroke-width="2.5">
<rect x="31.6" y="54.2" width="1037.4" height="135.2" rx="0.6"/>
<rect x="30.65" y="199.8" width="344.85" height="378.4" rx="0.6"/>
<rect x="382.55" y="199.8" width="685.85" height="378.5" rx="0.6"/>
<rect x="31.6" y="587.5" width="121.8" height="121" rx="0.6"/>
<rect x="159.4" y="587.5" width="785.9" height="185" rx="0.6"/>
<rect x="952.5" y="587.5" width="115.9" height="55.9" rx="0.6"/>
</g></svg>
<svg class="a" style="left:14px;top:51px" width="40" height="40" viewBox="0 0 40 40">
<rect x="0" y="0" width="40" height="40" fill="#fff"/>
<path d="M0 0 H10.5 V5.3 H5.5 V34.7 H10.5 V40 H0 Z" fill="#c83b30"/>
<path d="M40 0 H29.5 V5.3 H34.5 V34.7 H29.5 V40 H40 Z" fill="#c83b30"/>
<path d="M18.6 9.1 H23.6 V31.4 H18.6 V15.8 Q16.5 17.6 13.6 18.6 V13.8 Q17 12.4 18.6 9.1 Z" fill="#c83b30"/>
</svg>
<svg class="a" style="left:14px;top:227px" width="40" height="40" viewBox="0 0 40 40">
<rect x="0" y="0" width="40" height="40" fill="#fff"/>
<path d="M0 0 H10.5 V5.3 H5.5 V34.7 H10.5 V40 H0 Z" fill="#c83b30"/>
<path d="M40 0 H29.5 V5.3 H34.5 V34.7 H29.5 V40 H40 Z" fill="#c83b30"/>
<text x="20.0" y="31.4" text-anchor="middle" font-family="Liberation Sans" font-weight="700" font-size="30" fill="#c83b30" transform="translate(20.0 0) scale(1.02 1) translate(-20.0 0)">2</text>
</svg>
<svg class="a" style="left:1061px;top:227px" width="40" height="40" viewBox="0 0 40 40">
<rect x="0" y="0" width="40" height="40" fill="#fff"/>
<path d="M0 0 H10.5 V5.3 H5.5 V34.7 H10.5 V40 H0 Z" fill="#c83b30"/>
<path d="M40 0 H29.5 V5.3 H34.5 V34.7 H29.5 V40 H40 Z" fill="#c83b30"/>
<text x="20.0" y="31.4" text-anchor="middle" font-family="Liberation Sans" font-weight="700" font-size="30" fill="#c83b30" transform="translate(20.0 0) scale(1.02 1) translate(-20.0 0)">3</text>
</svg>
<svg class="a" style="left:14px;top:620px" width="39" height="40" viewBox="0 0 39 40">
<rect x="0" y="0" width="39" height="40" fill="#fff"/>
<path d="M0 0 H10.5 V5.3 H5.5 V34.7 H10.5 V40 H0 Z" fill="#c83b30"/>
<path d="M39 0 H28.5 V5.3 H33.5 V34.7 H28.5 V40 H39 Z" fill="#c83b30"/>
<text x="19.5" y="31.4" text-anchor="middle" font-family="Liberation Sans" font-weight="700" font-size="30" fill="#c83b30" transform="translate(19.5 0) scale(1.02 1) translate(-19.5 0)">4</text>
</svg>
<svg class="a" style="left:529px;top:757px" width="39" height="40" viewBox="0 0 39 40">
<rect x="0" y="0" width="39" height="40" fill="#fff"/>
<path d="M0 0 H10.5 V5.3 H5.5 V34.7 H10.5 V40 H0 Z" fill="#c83b30"/>
<path d="M39 0 H28.5 V5.3 H33.5 V34.7 H28.5 V40 H39 Z" fill="#c83b30"/>
<text x="19.5" y="31.4" text-anchor="middle" font-family="Liberation Sans" font-weight="700" font-size="30" fill="#c83b30" transform="translate(19.5 0) scale(1.02 1) translate(-19.5 0)">5</text>
</svg>
<svg class="a" style="left:1061px;top:620px" width="40" height="40" viewBox="0 0 40 40">
<rect x="0" y="0" width="40" height="40" fill="#fff"/>
<path d="M0 0 H10.5 V5.3 H5.5 V34.7 H10.5 V40 H0 Z" fill="#c83b30"/>
<path d="M40 0 H29.5 V5.3 H34.5 V34.7 H29.5 V40 H40 Z" fill="#c83b30"/>
<text x="20.0" y="31.4" text-anchor="middle" font-family="Liberation Sans" font-weight="700" font-size="30" fill="#c83b30" transform="translate(20.0 0) scale(1.02 1) translate(-20.0 0)">6</text>
</svg>
</body></html>
